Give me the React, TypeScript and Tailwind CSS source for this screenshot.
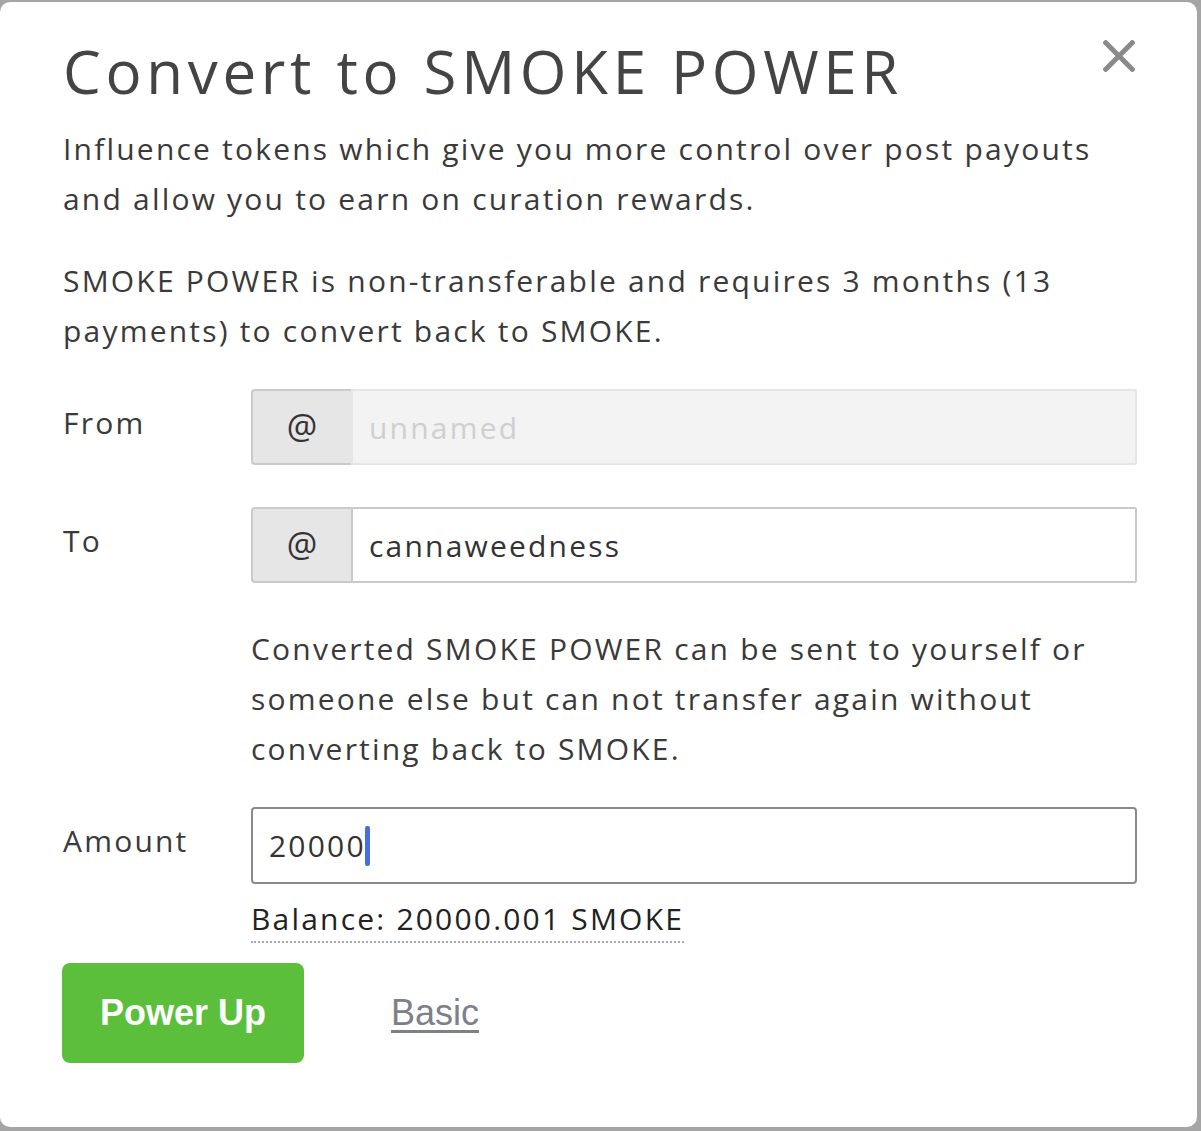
const font = { fontFamily: '"Open Sans", "Noto Sans", sans-serif' };

function AccountField({ value, disabled }: { value: string; disabled?: boolean }) {
  return (
    <div className="flex h-[76px] w-full">
      <span className="flex w-[100px] shrink-0 items-center justify-center rounded-l-[4px] border-2 border-r-0 border-[#cacaca] bg-[#e6e6e6] pb-[2px] text-[34px] tracking-normal text-[#333]">
        @
      </span>
      <div
        className={`flex flex-1 items-center rounded-r-[2px] border-2 px-[16px] ${
          disabled
            ? "border-[#e6e6e6] bg-[#f3f3f3] text-[#cfcfcf]"
            : "border-[#cacaca] bg-white text-[#333]"
        }`}
      >
        {value}
      </div>
    </div>
  );
}

export default function App() {
  return (
    <div className="h-[1131px] w-[1201px] overflow-hidden bg-[#a5a5a5] pt-[2px]" style={font}>
      <div className="relative h-[1125px] w-[1197px] rounded-[10px] bg-white pl-[63px] pr-[60px] pt-[33px] text-[#3a3a3a]">
        {/* close button */}
        <button className="absolute right-[62px] top-[38px]">
          <svg width="32" height="32" viewBox="0 0 32 32" fill="none" stroke="#8a8a8a" strokeWidth="5">
            <path d="M1 1 L31 31 M31 1 L1 31" />
          </svg>
        </button>

        <h1 className="text-[60px] leading-[72px] tracking-[4.7px] text-[#444]">Convert to SMOKE POWER</h1>

        <p className="mt-[17px] text-[30px] leading-[50px] tracking-[2.2px]">
          Influence tokens which give you more control over post payouts and allow you to earn on curation rewards.
        </p>
        <p className="mt-[32px] text-[30px] leading-[50px] tracking-[2.2px]">
          SMOKE POWER is non-transferable and requires 3 months (13 payments) to convert back to SMOKE.
        </p>

        <div className="mt-[33px] grid grid-cols-[188px_1fr] gap-y-[42px] text-[30px] tracking-[2.2px]">
          <label className="pt-[13px] leading-[42px]">From</label>
          <AccountField value="unnamed" disabled />

          <label className="pt-[13px] leading-[42px]">To</label>
          <div>
            <AccountField value="cannaweedness" />
            <p className="mt-[41px] leading-[50px]">
              Converted SMOKE POWER can be sent to yourself or someone else but can not transfer again without converting back to SMOKE.
            </p>
          </div>
        </div>

        <div className="mt-[33px] grid grid-cols-[188px_1fr] text-[30px] tracking-[2.2px]">
          <label className="pt-[13px] leading-[42px]">Amount</label>
          <div>
            <div className="flex h-[77px] items-center rounded-[4px] border-2 border-[#8a8a8a] bg-white px-[16px] text-[#333]">
              20000
              <span className="-ml-[1px] h-[40px] w-[5px] rounded-[2px] bg-[#4a6ee0]" />
            </div>
            <div className="mt-[12px]">
              <span className="border-b-2 border-dotted border-[#aaa] pb-[2px] leading-[38px] text-[#222]">
                Balance: 20000.001 SMOKE
              </span>
            </div>
          </div>
        </div>

        <div className="-ml-[1px] mt-[22px] flex items-center gap-[87px]" style={{ fontFamily: '"Liberation Sans", Arial, sans-serif' }}>
          <button className="h-[100px] w-[242px] rounded-[8px] bg-[#5bbf3c] text-[36px] font-bold text-white">
            Power Up
          </button>
          <a className="text-[36px] text-[#7c8088] underline underline-offset-[5px]">Basic</a>
        </div>
      </div>
    </div>
  );
}
